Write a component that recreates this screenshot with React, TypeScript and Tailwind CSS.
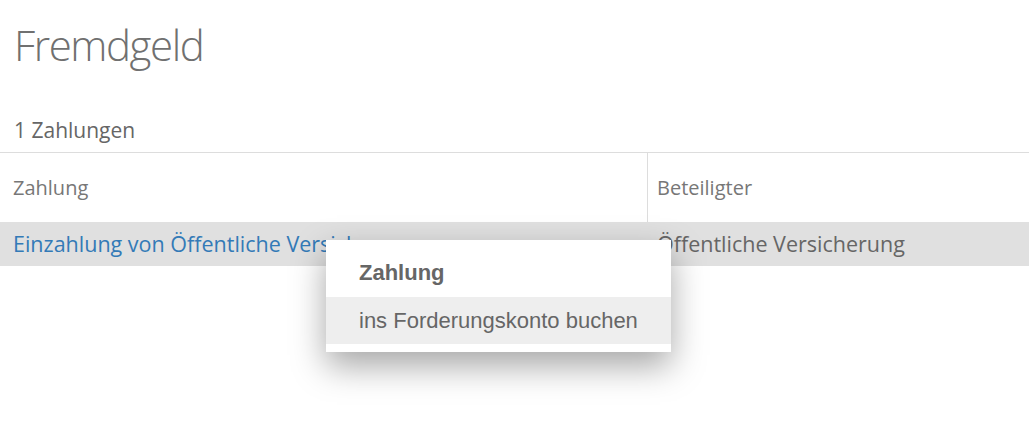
const ContextMenu = () => {
  return (
    <div className="absolute left-[326px] top-[240px] w-[345px] bg-white pb-2 shadow-[0_14px_32px_rgba(0,0,0,0.35)] font-['Liberation_Sans',Arial,sans-serif]">
      <div className="pl-[33px] pt-5 pb-3 text-[22px] leading-[25px] font-bold text-[#666]">Zahlung</div>
      <div className="pl-[33px] bg-[#eeeeee] text-[22px] leading-[47px] text-[#666]">ins Forderungskonto buchen</div>
    </div>
  );
};

export default function App() {
  return (
    <div className="relative min-h-[424px] bg-white font-['Open_Sans',sans-serif]">
      {/* Title */}
      <h1 className="pl-[14px] pt-4 text-[42px] leading-[57px] font-light tracking-[-1.4px] text-[#707070]">
        Fremdgeld
      </h1>

      <div className="mt-[44px] pl-[14px] pb-2 text-[21px] leading-[27px] text-[#666] border-b border-[#dddddd]">
        1 Zahlungen
      </div>

      {/* Table */}
      <div className="grid grid-cols-[648px_1fr]">
        <div className="pl-[13px] pt-[21px] pb-[21px] text-[20px] leading-[27px] text-[#777] border-r border-[#dddddd]">
          Zahlung
        </div>
        <div className="pl-[9px] pt-[21px] pb-[21px] text-[20px] leading-[27px] text-[#777]">Beteiligter</div>

        <div className="pl-[13px] pt-2 pb-2 bg-[#e0e0e0] text-[21.5px] leading-[28px] text-[#337ab7] whitespace-nowrap overflow-hidden">
          Einzahlung von Öffentliche Versicherung
        </div>
        <div className="pl-[9px] pt-2 pb-2 bg-[#e0e0e0] text-[21.5px] leading-[28px] text-[#666] whitespace-nowrap">
          Öffentliche Versicherung
        </div>
      </div>

      <ContextMenu />
    </div>
  );
}
